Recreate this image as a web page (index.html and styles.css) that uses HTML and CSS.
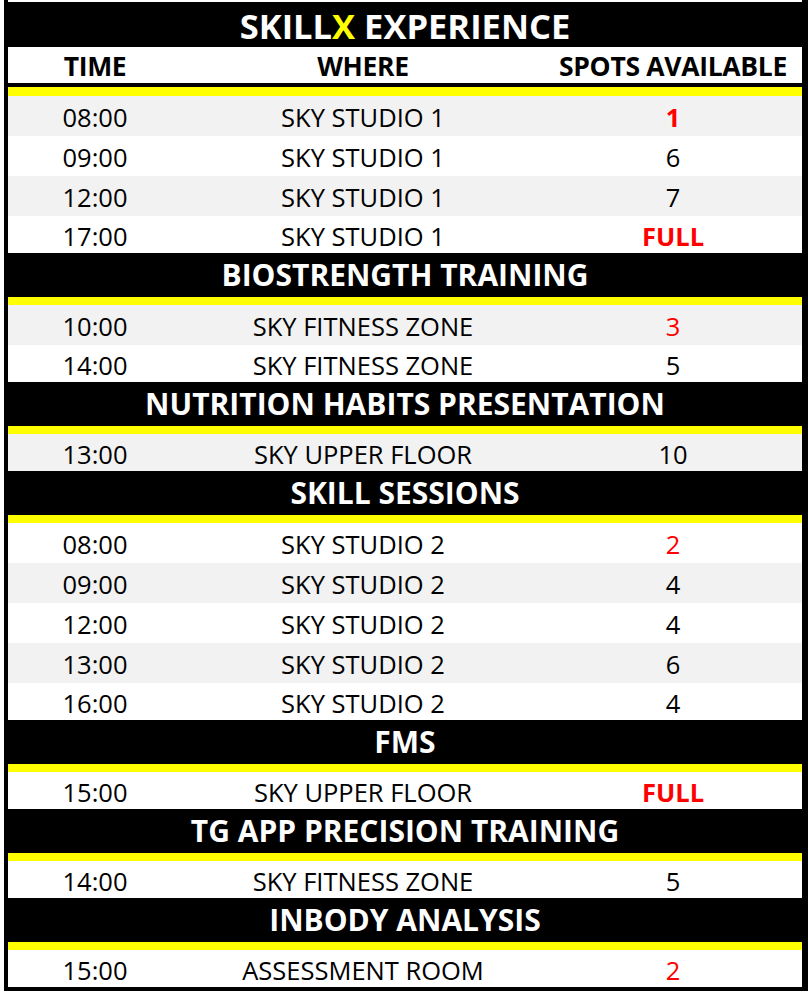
FILE: index.html
```html
<!DOCTYPE html>
<html lang="en">
<head>
<meta charset="utf-8">
<title>SkillX Experience</title>
<link rel="stylesheet" href="styles.css">
</head>
<body>
<div class="sheet">
  <div class="band title"><span>SKILL<span class="x">X</span> EXPERIENCE</span></div>
  <div class="grid colhead"><span>TIME</span><span>WHERE</span><span>SPOTS AVAILABLE</span></div>
  <div class="rule first"></div>
  <div class="rows">
    <div class="grid row alt"><span>08:00</span><span>SKY STUDIO 1</span><span class="red bold">1</span></div>
    <div class="grid row"><span>09:00</span><span>SKY STUDIO 1</span><span>6</span></div>
    <div class="grid row alt"><span>12:00</span><span>SKY STUDIO 1</span><span>7</span></div>
    <div class="grid row"><span>17:00</span><span>SKY STUDIO 1</span><span class="red bold">FULL</span></div>
  </div>
  <div class="band section">BIOSTRENGTH TRAINING</div>
  <div class="rule"></div>
  <div class="rows">
    <div class="grid row alt"><span>10:00</span><span>SKY FITNESS ZONE</span><span class="red">3</span></div>
    <div class="grid row"><span>14:00</span><span>SKY FITNESS ZONE</span><span>5</span></div>
  </div>
  <div class="band section">NUTRITION HABITS PRESENTATION</div>
  <div class="rule"></div>
  <div class="rows">
    <div class="grid row alt"><span>13:00</span><span>SKY UPPER FLOOR</span><span>10</span></div>
  </div>
  <div class="band section">SKILL SESSIONS</div>
  <div class="rule"></div>
  <div class="rows">
    <div class="grid row"><span>08:00</span><span>SKY STUDIO 2</span><span class="red">2</span></div>
    <div class="grid row alt"><span>09:00</span><span>SKY STUDIO 2</span><span>4</span></div>
    <div class="grid row"><span>12:00</span><span>SKY STUDIO 2</span><span>4</span></div>
    <div class="grid row alt"><span>13:00</span><span>SKY STUDIO 2</span><span>6</span></div>
    <div class="grid row"><span>16:00</span><span>SKY STUDIO 2</span><span>4</span></div>
  </div>
  <div class="band section">FMS</div>
  <div class="rule"></div>
  <div class="rows">
    <div class="grid row"><span>15:00</span><span>SKY UPPER FLOOR</span><span class="red bold">FULL</span></div>
  </div>
  <div class="band section">TG APP PRECISION TRAINING</div>
  <div class="rule"></div>
  <div class="rows">
    <div class="grid row"><span>14:00</span><span>SKY FITNESS ZONE</span><span>5</span></div>
  </div>
  <div class="band section">INBODY ANALYSIS</div>
  <div class="rule"></div>
  <div class="rows">
    <div class="grid row"><span>15:00</span><span>ASSESSMENT ROOM</span><span class="red">2</span></div>
  </div>
</div>
</body>
</html>
```

FILE: styles.css
```css
html, body {
  margin: 0;
  padding: 0;
  background: #ffffff;
}

body {
  font-family: "Open Sans", "Liberation Sans", sans-serif;
  color: #000000;
}

.sheet {
  margin-left: 4px;
  width: 794px;
  padding-top: 2px;
  border-left: 4px solid #000000;
  border-right: 6px solid #000000;
  border-bottom: 4px solid #000000;
  background: #ffffff;
}

.band {
  background: #000000;
  color: #ffffff;
  font-weight: 700;
  text-align: center;
  display: flex;
  align-items: center;
  justify-content: center;
  white-space: nowrap;
}

.title {
  height: 45px;
  font-size: 34.5px;
  padding-top: 1px;
  box-sizing: border-box;
}

.title .x {
  color: #ffff00;
}

.section {
  height: 44px;
  font-size: 30px;
  padding-bottom: 2px;
  box-sizing: border-box;
}

.grid {
  display: grid;
  grid-template-columns: 174px 362px 258px;
  align-items: center;
  text-align: center;
  white-space: nowrap;
}

.colhead {
  font-weight: 700;
  font-size: 26.5px;
  letter-spacing: -0.3px;
  border-bottom: 4px solid #000000;
  padding-top: 1px;
  box-sizing: border-box;
  height: 40px;
}

.rule {
  height: 8px;
  background: #ffff00;
}

.rule.first {
  height: 9px;
}

.row {
  height: 40px;
  font-size: 25.5px;
  padding-top: 2px;
  box-sizing: border-box;
  background: #ffffff;
}

.rows .row:last-child {
  height: 37px;
}

.row.alt {
  background: #f2f2f2;
}

.red {
  color: #ff0000;
}

.bold {
  font-weight: 700;
}
```
